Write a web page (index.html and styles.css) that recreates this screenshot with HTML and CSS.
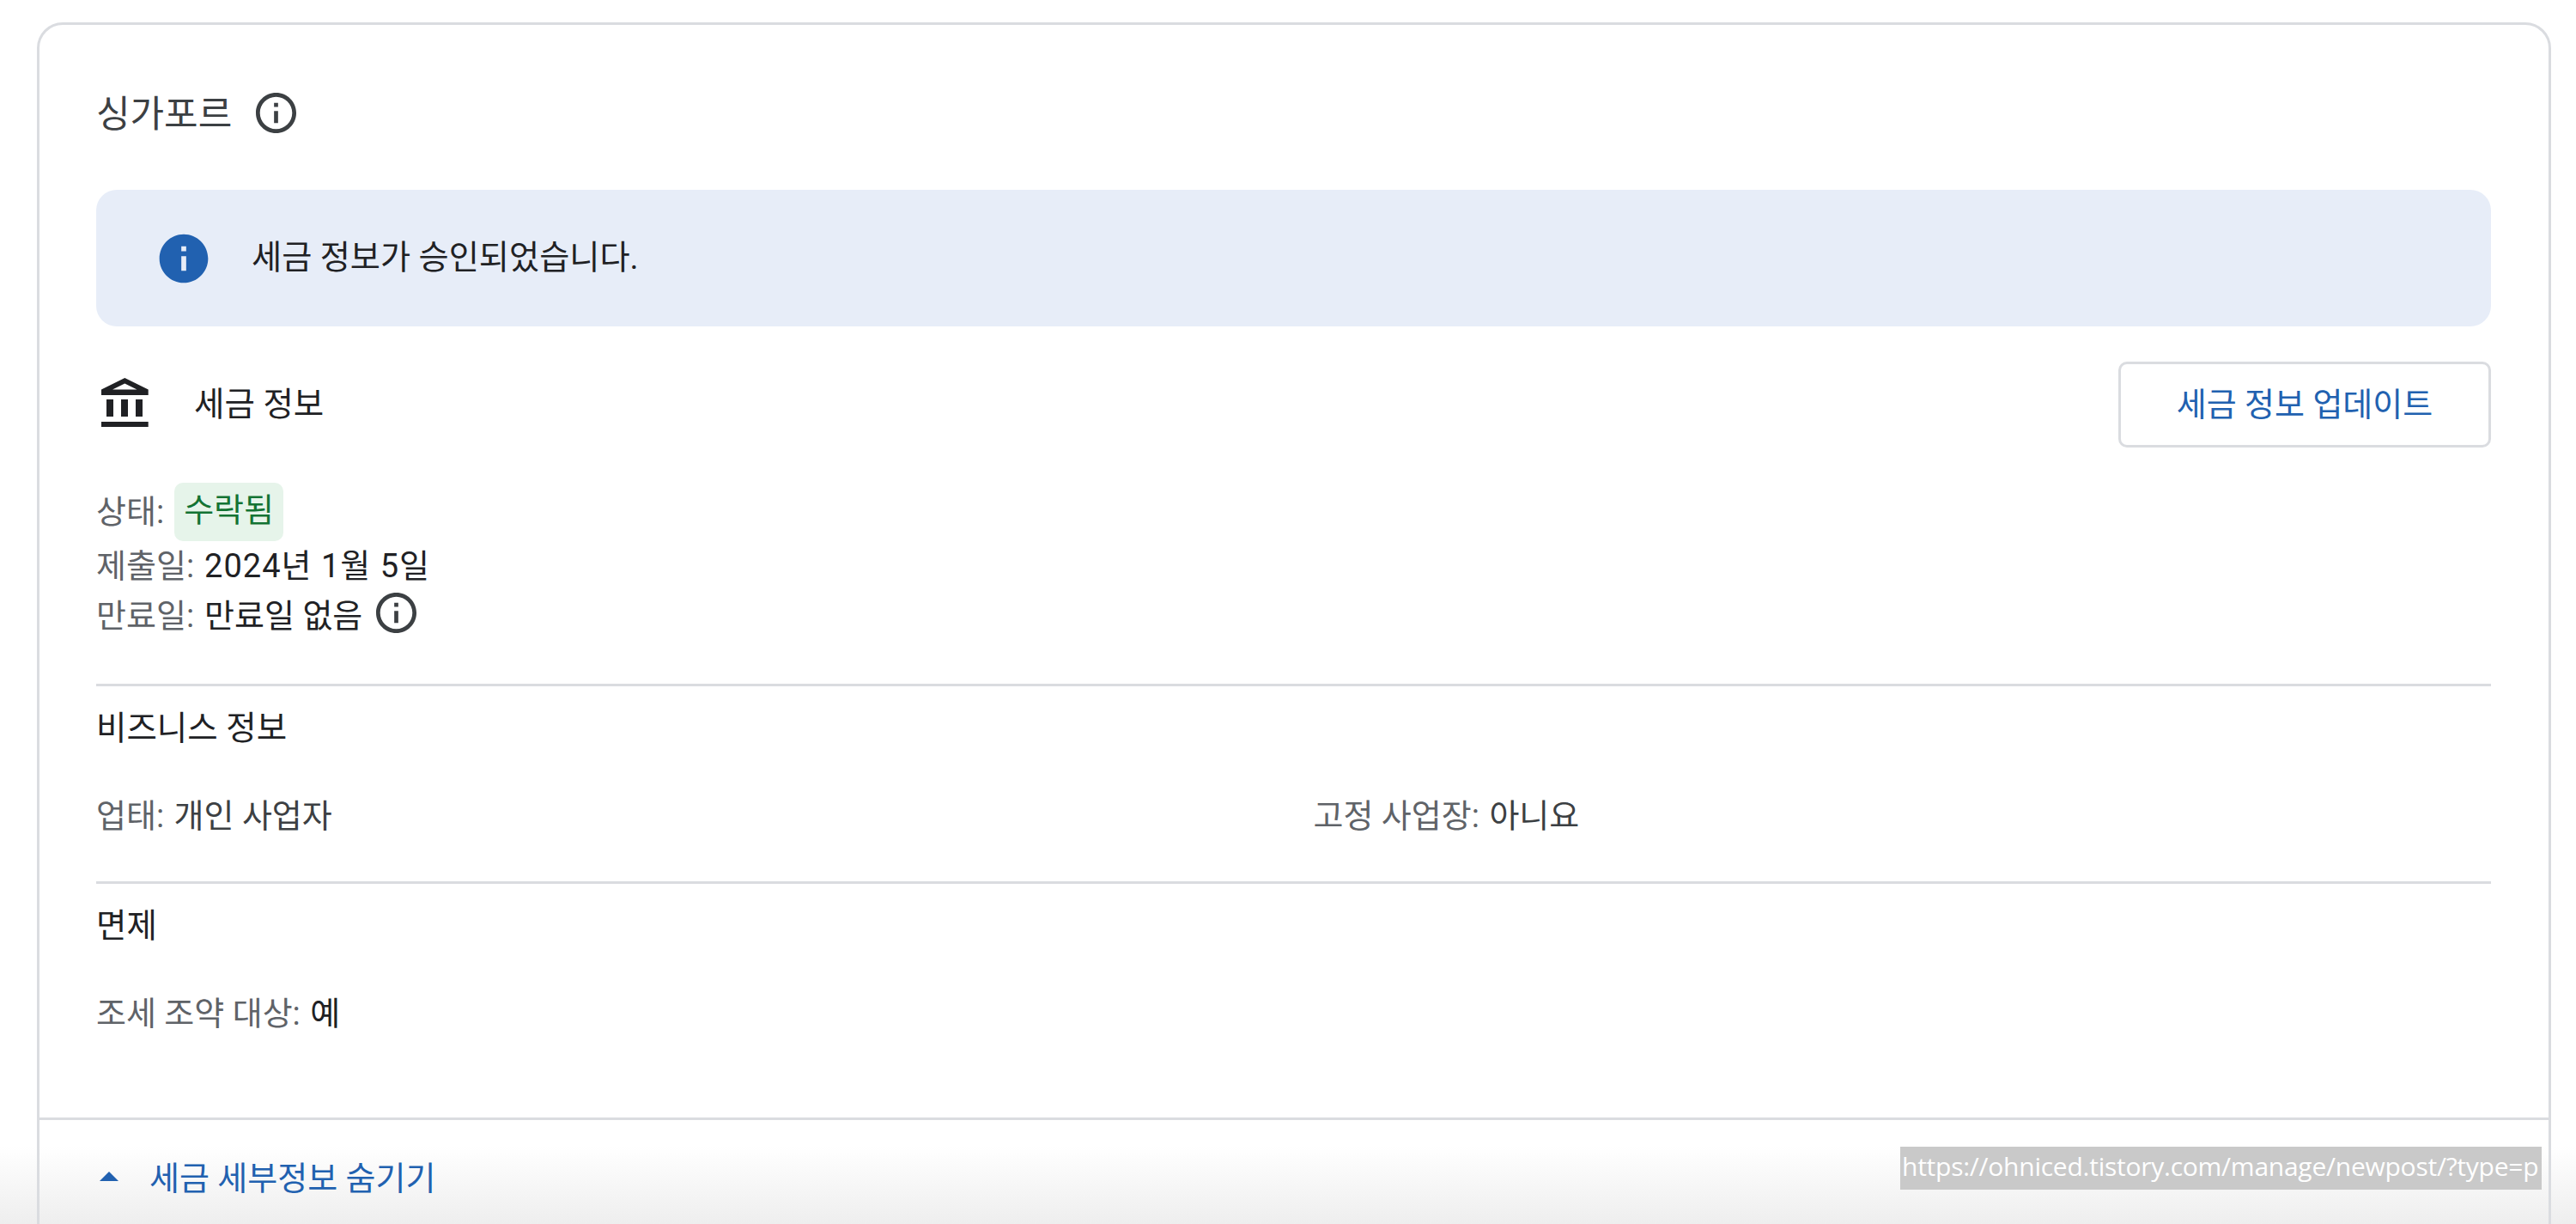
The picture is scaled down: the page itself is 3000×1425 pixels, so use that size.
FILE: index.html
```html
<!DOCTYPE html>
<html lang="ko">
<head>
    <meta charset="UTF-8">
    <meta name="viewport" content="width=device-width, initial-scale=1.0">
    <title>세금 정보</title>
    <link rel="stylesheet" href="styles.css">
</head>
<body>
    <div class="card">
        <div class="card-body">
            <div class="card-title">
                <span>싱가포르</span>
                <svg class="info-outline title-info" viewBox="2 2 20 20"><path d="M11 7h2v2h-2zm0 4h2v6h-2zm1-9C6.48 2 2 6.48 2 12s4.48 10 10 10 10-4.48 10-10S17.52 2 12 2zm0 18c-4.41 0-8-3.59-8-8s3.59-8 8-8 8 3.59 8 8-3.59 8-8 8z"/></svg>
            </div>

            <div class="notice">
                <svg class="notice-icon" viewBox="0 0 24 24"><path d="M12 2C6.48 2 2 6.48 2 12s4.48 10 10 10 10-4.48 10-10S17.52 2 12 2zm1 15h-2v-6h2v6zm0-8h-2V7h2v2z"/></svg>
                <p>세금 정보가 승인되었습니다.</p>
            </div>

            <div class="tax-head">
                <svg class="bank-icon" viewBox="0 0 55 57"><path fill-rule="evenodd" d="M27.3 0L54.7 13.5V20H0V13.5ZM13 13.5H41.5L27.3 6.5ZM6 25h8v20H6ZM23 25h8v20h-8ZM40 25h8v20h-8ZM0 51h54.7v6H0Z"/></svg>
                <h3>세금 정보</h3>
                <button class="update-btn">세금 정보 업데이트</button>
            </div>

            <div class="status-list">
                <div class="status-row status-first"><span class="label">상태:</span> <span class="chip">수락됨</span></div>
                <div class="status-row"><span class="label">제출일:</span> <span class="value date">2024년 1월 5일</span></div>
                <div class="status-row">
                    <span class="label">만료일:</span> <span class="value">만료일 없음</span>
                    <svg class="info-outline row-info" viewBox="2 2 20 20"><path d="M11 7h2v2h-2zm0 4h2v6h-2zm1-9C6.48 2 2 6.48 2 12s4.48 10 10 10 10-4.48 10-10S17.52 2 12 2zm0 18c-4.41 0-8-3.59-8-8s3.59-8 8-8 8 3.59 8 8-3.59 8-8 8z"/></svg>
                </div>
            </div>

            <div class="section">
                <h4>비즈니스 정보</h4>
                <div class="two-col">
                    <div><span class="label">업태:</span> <span class="muted">개인 사업자</span></div>
                    <div><span class="label">고정 사업장:</span> <span class="muted">아니요</span></div>
                </div>
            </div>

            <div class="section">
                <h4>면제</h4>
                <div class="two-col">
                    <div><span class="label">조세 조약 대상:</span> <span class="value">예</span></div>
                </div>
            </div>
        </div>

        <div class="card-footer">
            <span class="arrow"></span>
            <span class="footer-text">세금 세부정보 숨기기</span>
        </div>
    </div>

    <div class="bottom-shade"></div>
    <div class="url-tip">https://ohniced.tistory.com/manage/newpost/?type=p</div>
</body>
</html>
```

FILE: styles.css
```css
* {
    padding: 0;
    margin: 0;
    box-sizing: border-box;
}

html, body {
    height: 1425px;
    overflow: hidden;
}

body {
    background-color: #ffffff;
    font-family: Roboto, "Noto Sans CJK KR", sans-serif;
    color: #202124;
}

.card {
    margin: 26px 29px 0 43px;
    height: 1440px;
    border: 3px solid #dadce0;
    border-radius: 30px;
}

.card-body {
    padding: 79px 67px 0 66px;
    height: 1272px;
}

.card-title {
    display: flex;
    align-items: center;
    gap: 28px;
    height: 47px;
    font-size: 43px;
    color: #3c4043;
}

.card-title span {
    padding-bottom: 6px;
}

.info-outline {
    fill: #3c4043;
    display: block;
}

.title-info {
    width: 47px;
    height: 47px;
}

.notice {
    display: flex;
    align-items: center;
    gap: 45px;
    height: 159px;
    margin-top: 66px;
    padding-left: 68px;
    background-color: #e7edf8;
    border-radius: 24px;
    font-size: 38.2px;
}

.notice p {
    padding-bottom: 8px;
}

.notice-icon {
    width: 68px;
    height: 68px;
    fill: #2161b0;
}

.tax-head {
    display: flex;
    align-items: center;
    height: 100px;
    margin-top: 41px;
}

.bank-icon {
    width: 55px;
    height: 57px;
    margin: 0 0 5px 6px;
    fill: #202124;
}

.tax-head h3 {
    font-size: 38.5px;
    font-weight: 400;
    margin-left: 53px;
    padding-bottom: 8px;
}

.update-btn {
    margin-left: auto;
    width: 434px;
    height: 100px;
    padding-bottom: 8px;
    background-color: #ffffff;
    border: 3px solid #dadce0;
    border-radius: 10px;
    color: #2161b0;
    font-family: inherit;
    font-size: 38px;
}

.status-list {
    margin-top: 41px;
    font-size: 38px;
    padding-bottom: 50px;
    border-bottom: 3px solid #dadce0;
}

.status-row {
    display: flex;
    align-items: center;
    height: 58px;
    padding-bottom: 8px;
    gap: 10px;
}

.status-first {
    height: 68px;
    padding-bottom: 0;
}

.status-first .label {
    padding-bottom: 8px;
}

.label {
    color: #5f6368;
    margin-right: 2px;
}

.value {
    color: #202124;
}

.date {
    letter-spacing: 1px;
}

.muted {
    color: #3c4043;
}

.chip {
    display: inline-block;
    height: 68px;
    padding: 0 11px;
    line-height: 64px;
    border-radius: 10px;
    background-color: #e6f4ea;
    color: #137333;
}

.row-info {
    width: 47px;
    height: 47px;
    margin-left: 6px;
}

.section {
    font-size: 38px;
    height: 230px;
    border-bottom: 3px solid #dadce0;
    padding-top: 27px;
}

.section:last-child {
    border-bottom: none;
}

.section h4 {
    font-size: 38.5px;
    font-weight: 400;
    line-height: 44px;
}

.two-col {
    display: grid;
    grid-template-columns: 1fr 1fr;
    column-gap: 46px;
    margin-top: 58px;
    line-height: 44px;
}

.card-footer {
    display: flex;
    align-items: center;
    height: 134px;
    padding-left: 70px;
    border-top: 3px solid #dadce0;
    color: #2161b0;
    font-size: 38px;
}

.footer-text {
    padding-bottom: 3px;
}

.arrow {
    width: 0;
    height: 0;
    border-left: 11px solid transparent;
    border-right: 11px solid transparent;
    border-bottom: 11px solid #2161b0;
    margin-right: 36px;
}

.bottom-shade {
    position: absolute;
    z-index: -1;
    left: 0;
    right: 0;
    top: 1335px;
    height: 90px;
    background: linear-gradient(to bottom, rgba(238, 238, 238, 0), #eeeeee);
}

.url-tip {
    position: absolute;
    left: 2213px;
    top: 1335px;
    width: 747px;
    height: 50px;
    overflow: hidden;
    padding-left: 2px;
    background-color: #c9c9c9;
    color: #ffffff;
    font-family: "Open Sans", sans-serif;
    font-size: 30px;
    letter-spacing: -0.25px;
    line-height: 45px;
    white-space: nowrap;
}
```
